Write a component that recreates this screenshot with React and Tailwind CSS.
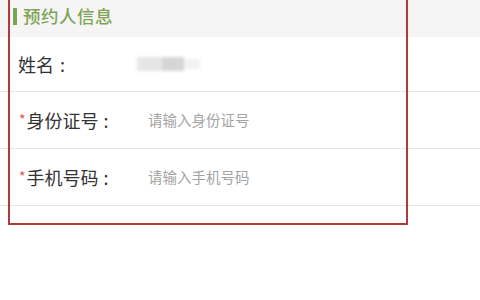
import React from 'react';

const FONT = { fontFamily: '"Noto Sans CJK SC", "Noto Sans", sans-serif' };

function Row({ label, required, children }) {
  return (
    <div className="h-[57px] flex items-center border-b border-[#e6e6e6] bg-white">
      <div className="w-[148px] shrink-0 flex items-center pl-[19px] text-[18px] text-[#333333]">
        {required && <span className="text-[#d9534f] text-[14px] mr-[1px] -mt-[2px]">*</span>}
        <span>{label}</span>
        <span className="ml-[5px]">:</span>
      </div>
      <div className="flex-1 text-[14.5px] text-[#a3a3a3]">{children}</div>
    </div>
  );
}

export default function App() {
  return (
    <div className="relative w-[480px] h-[300px] bg-white overflow-hidden" style={FONT}>
      <div className="h-[37px] bg-[#f5f5f5] flex items-center pb-[4px] pl-[13px]">
        <span className="w-[4px] h-[17px] bg-[#79a651] mr-[6px]" />
        <span className="text-[17.5px] font-medium text-[#7ea455] tracking-[0.5px]">预约人信息</span>
      </div>
      <div className="h-[55px] flex items-center border-b border-[#e6e6e6]">
        <div className="w-[137px] shrink-0 pl-[18px] text-[18px] text-[#333333]">
          姓名<span className="ml-[6px]">:</span>
        </div>
        <div className="flex items-center blur-[1.5px]">
          <span className="w-[25px] h-[14px] bg-[#e6e6e6]" />
          <span className="w-[22px] h-[14px] bg-[#d6d6d6]" />
          <span className="w-[16px] h-[10px] bg-[#f2f2f2]" />
        </div>
      </div>
      <Row label="身份证号" required>请输入身份证号</Row>
      <Row label="手机号码" required>请输入手机号码</Row>

      <div className="absolute left-[8px] top-[-4px] w-[400px] h-[229px] border-2 border-[#b03b39] pointer-events-none" />
    </div>
  );
}
